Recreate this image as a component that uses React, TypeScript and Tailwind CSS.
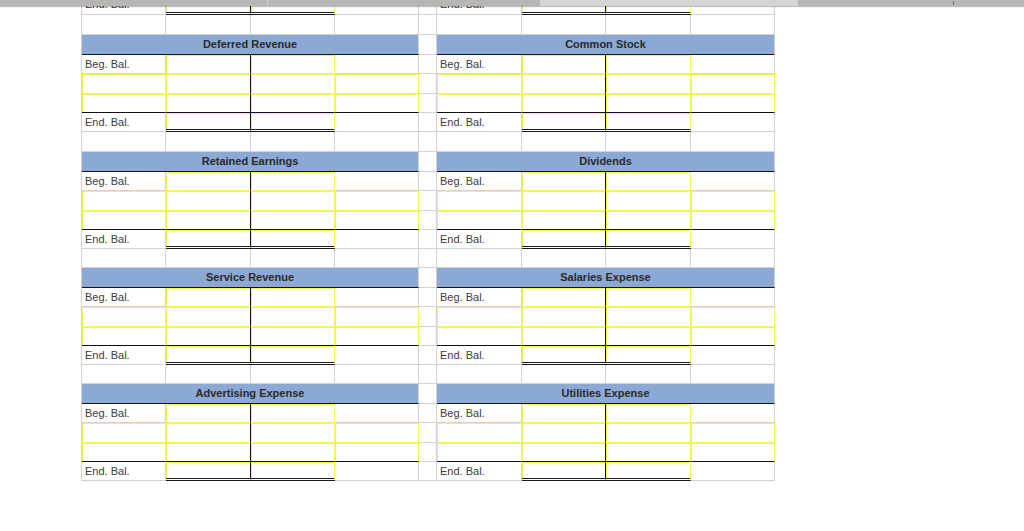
import { ReactElement } from "react";

type RowKind = "header" | "beg" | "mid" | "midLast" | "end" | "empty";

const COLS = "grid grid-cols-[84px_85px_84px_84px_18px_85px_84px_85px_84px]";

const GRID = "border-r border-b border-[#d2d2d2]";
const YELLOW = "border-r border-b border-[#f3f35e] shadow-[inset_1px_1px_0_0_#f3f35e]";

const blocks: [string, string][] = [
  ["Deferred Revenue", "Common Stock"],
  ["Retained Earnings", "Dividends"],
  ["Service Revenue", "Salaries Expense"],
  ["Advertising Expense", "Utilities Expense"],
];

function Label({ text }: { text: string }): ReactElement {
  return <span className="pl-[3px] text-[11px] leading-none text-[#3c3c3c]">{text}</span>;
}

function Side({ kind, title }: { kind: RowKind; title: string }): ReactElement {
  if (kind === "header") {
    return (
      <div className="col-span-4 flex items-center justify-center border-r border-r-[#d2d2d2] border-b border-b-[#151515] bg-[#8ca8d4] text-[11px] font-bold leading-none text-[#2a2a2a]">
        {title}
      </div>
    );
  }
  if (kind === "empty") {
    return (
      <>
        <div className={GRID} />
        <div className={GRID} />
        <div className={GRID} />
        <div className={GRID} />
      </>
    );
  }
  if (kind === "beg" || kind === "end") {
    const dbl = kind === "end" ? "border-b-[3px] border-double border-b-[#1a1a1a]" : "";
    return (
      <>
        <div className={`${GRID} flex items-center`}>
          <Label text={kind === "beg" ? "Beg. Bal." : "End. Bal."} />
        </div>
        <div className={`${YELLOW} border-r-[#111] ${dbl}`} />
        <div className={`${YELLOW} ${dbl}`} />
        <div className={GRID} />
      </>
    );
  }
  const bottom = kind === "midLast" ? "border-b-[#111]" : "";
  return (
    <>
      <div className={`${YELLOW} ${bottom}`} />
      <div className={`${YELLOW} border-r-[#111] ${bottom}`} />
      <div className={`${YELLOW} ${bottom}`} />
      <div className={`${YELLOW} ${bottom}`} />
    </>
  );
}

function Row({ kind, titles, h }: { kind: RowKind; titles: [string, string]; h: string }): ReactElement {
  return (
    <div className={`${COLS} ${h} border-l border-[#d2d2d2]`}>
      <Side kind={kind} title={titles[0]} />
      <div className={GRID} />
      <Side kind={kind} title={titles[1]} />
    </div>
  );
}

function Block({ titles, last, emptyH }: { titles: [string, string]; last?: boolean; emptyH: string }): ReactElement {
  return (
    <>
      <Row kind="header" titles={titles} h="h-[20px]" />
      <Row kind="beg" titles={titles} h="h-[19px]" />
      <Row kind="mid" titles={titles} h="h-[20px]" />
      <Row kind="midLast" titles={titles} h="h-[19px]" />
      <Row kind="end" titles={titles} h="h-[19px]" />
      {!last && <Row kind="empty" titles={titles} h={emptyH} />}
    </>
  );
}

export default function App(): ReactElement {
  return (
    <div className="relative h-[531px] w-[1024px] overflow-hidden bg-white font-['Liberation_Sans',Arial,sans-serif]">
      <div className="-mt-[5px] ml-[81px] w-[694px]">
        <Row kind="end" titles={["", ""]} h="h-[20px]" />
        <Row kind="empty" titles={["", ""]} h="h-[20px]" />
        {blocks.map((t, i) => (
          <Block key={t[0]} titles={t} last={i === blocks.length - 1} emptyH={i === 0 ? "h-[20px]" : "h-[19px]"} />
        ))}
      </div>

      {/* strip over the top of the sheet */}
      <div className="absolute left-0 right-0 top-0 flex h-[6px] bg-[#b8b6b4] shadow-[0_1px_1px_rgba(0,0,0,0.25)]">
        <div className="w-[268px] border-r border-[#cfcdcb]" />
        <div className="w-[272px]" />
        <div className="w-[258px] bg-[#d6d4d2]" />
        <div className="flex-1" />
        <div className="mr-[70px] mt-[1px] h-[4px] w-px bg-[#6a6a6a]" />
      </div>
    </div>
  );
}
